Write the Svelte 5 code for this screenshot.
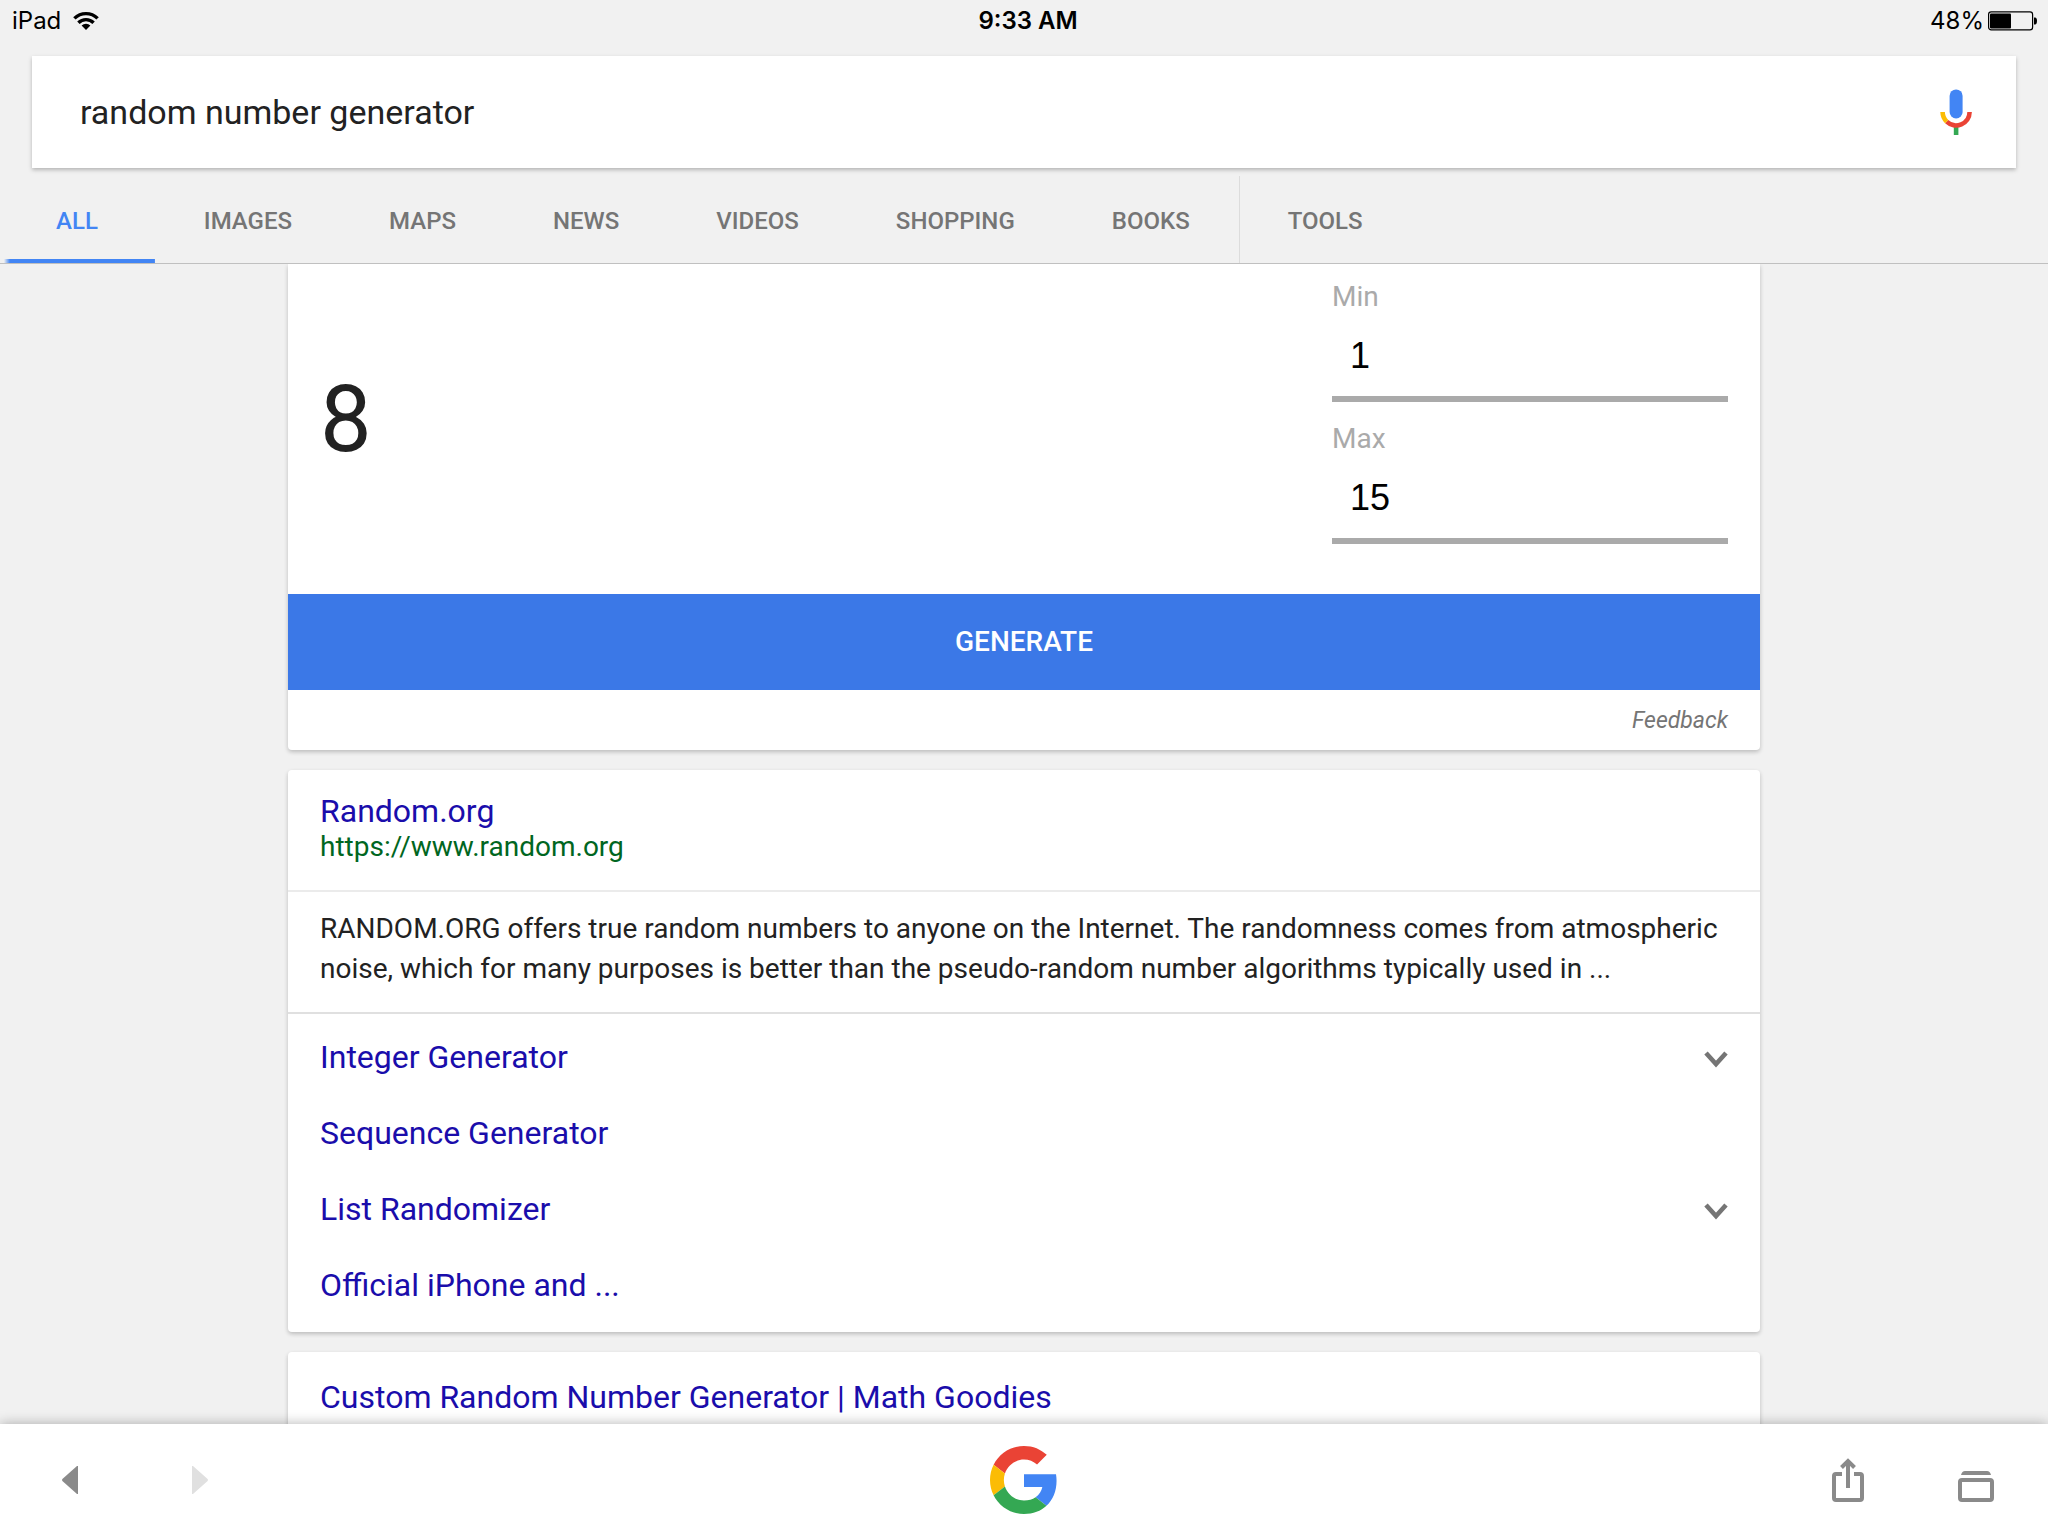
<script>
  const tabs = ['All', 'Images', 'Maps', 'News', 'Videos', 'Shopping', 'Books'];
  const sitelinks = [
    { label: 'Integer Generator', expandable: true },
    { label: 'Sequence Generator', expandable: false },
    { label: 'List Randomizer', expandable: true },
    { label: 'Official iPhone and ...', expandable: false }
  ];

  let query = $state('random number generator');
  let min = $state('1');
  let max = $state('15');
  let result = $state(8);

  function generate() {
    const low = Number(min);
    const high = Number(max);
    result = low + Math.floor(Math.random() * (high - low + 1));
  }
</script>

<div class="app">
  <div class="status">
    <div class="status-side">
      <span>iPad</span>
      <svg width="26" height="20" viewBox="0 0 26 20" fill="none" stroke="#000" stroke-width="3.4">
        <path d="M1.4 7.4a16.4 16.4 0 0 1 23.2 0" />
        <path d="M5.4 11.8a10.8 10.8 0 0 1 15.2 0" />
        <path d="M13 19l-4.4-4.6a6.4 6.4 0 0 1 8.8 0z" fill="#000" stroke="none" />
      </svg>
    </div>
    <time class="clock">9:33 AM</time>
    <div class="status-side end">
      <span>48%</span>
      <svg width="50" height="20" viewBox="0 0 50 20">
        <rect x="0.6" y="0.9" width="44" height="18" rx="2.6" fill="none" stroke="#000" stroke-width="1.2" />
        <rect x="2" y="2.4" width="21" height="15" rx="1" />
        <path d="M46 6.6h1c1.400 0 2 1.400 2 3.400s-.6 3.400-2 3.400h-1z" />
      </svg>
    </div>
  </div>

  <header>
    <form class="search" onsubmit={(e) => e.preventDefault()}>
      <input type="text" aria-label="Search" bind:value={query} />
      <button type="button" class="mic" aria-label="Voice search">
        <svg width="32" height="46" viewBox="0 0 32 46">
          <rect x="9.600" y="0.400" width="13" height="29" rx="6.400" fill="#4285f4" />
          <path d="M13.800 37h4.600v9h-4.600z" fill="#34a853" />
          <g fill="none" stroke-width="4.600">
            <path d="M29.600 23A13.500 13.500 0 0 1 6.700 32.600" stroke="#ea4335" />
            <path d="M6.700 32.600A13.500 13.500 0 0 1 2.600 23" stroke="#fbbc05" />
          </g>
        </svg>
      </button>
    </form>
    <nav>
      {#each tabs as tab, i}
        <a href="#{tab.toLowerCase()}" class:active={i === 0}>{tab}</a>
      {/each}
      <a href="#tools" class="tools">Tools</a>
    </nav>
  </header>

  <main>
    <section class="card first">
      <div class="generator">
        <output>{result}</output>
        <div class="fields">
          <div class="field">
            <label for="min">Min</label>
            <input id="min" type="text" inputmode="numeric" bind:value={min} />
          </div>
          <div class="field">
            <label for="max">Max</label>
            <input id="max" type="text" inputmode="numeric" bind:value={max} />
          </div>
        </div>
      </div>
      <button class="generate" onclick={generate}>GENERATE</button>
      <div class="feedback"><a href="#feedback">Feedback</a></div>
    </section>

    <article class="card">
      <div class="heading">
        <a class="title" href="#random-org">Random.org</a>
        <cite>https://www.random.org</cite>
      </div>
      <p>
        RANDOM.ORG offers true random numbers to anyone on the Internet. The randomness comes from
        atmospheric noise, which for many purposes is better than the pseudo-random number algorithms
        typically used in ...
      </p>
      <ul>
        {#each sitelinks as link}
          <li>
            <a class="title" href="#site">{link.label}</a>
            {#if link.expandable}
              <button class="expand" aria-label="Expand {link.label}">
                <svg width="24" height="24" viewBox="0 0 24 24" fill="none" stroke="#757575" stroke-width="4.600">
                  <path d="M2 8l10 11 10-11" />
                </svg>
              </button>
            {/if}
          </li>
        {/each}
      </ul>
    </article>

    <article class="card">
      <div class="heading single">
        <a class="title" href="#math-goodies">Custom Random Number Generator | Math Goodies</a>
      </div>
    </article>
  </main>

  <footer>
    <div class="tools-group">
      <button aria-label="Back">
        <svg width="64" height="64" viewBox="0 0 64 64" fill="#8a8a8a"><path d="M38 18v28h-1L22.400 33q-.8-1 0-2L37 18z" /></svg>
      </button>
      <button aria-label="Forward" disabled>
        <svg width="64" height="64" viewBox="0 0 64 64" fill="#e0e0e0"><path d="M24 18v28h1l14.600-13q.8-1 0-2L25 18z" /></svg>
      </button>
    </div>
    <button aria-label="Google home">
      <svg width="68" height="68" viewBox="0 0 48 48">
        <path fill="#ea4335" d="M24 9.500c3.540 0 6.710 1.220 9.210 3.600l6.850-6.850C35.900 2.380 30.470 0 24 0 14.620 0 6.510 5.380 2.560 13.220l7.980 6.190C12.430 13.720 17.740 9.500 24 9.500z" />
        <path fill="#4285f4" d="M46.980 24.550c0-1.570-.15-3.090-.38-4.550H24v9.020h12.940c-.58 2.960-2.260 5.480-4.780 7.180l7.730 6c4.510-4.180 7.090-10.360 7.090-17.650z" />
        <path fill="#fbbc05" d="M10.530 28.590c-.48-1.450-.76-2.990-.76-4.590s.27-3.140.76-4.590l-7.980-6.190C.92 16.460 0 20.120 0 24c0 3.880.92 7.540 2.560 10.780l7.970-6.190z" />
        <path fill="#34a853" d="M24 48c6.480 0 11.930-2.130 15.890-5.810l-7.730-6c-2.150 1.450-4.920 2.300-8.160 2.300-6.260 0-11.570-4.220-13.470-9.910l-7.980 6.190C6.510 42.620 14.620 48 24 48z" />
      </svg>
    </button>
    <div class="tools-group end">
      <button aria-label="Share">
        <svg width="64" height="64" viewBox="0 0 64 64" fill="none" stroke="#8a8a8a" stroke-width="4">
          <path d="M26 26h-6q-2 0-2 2v22q0 2 2 2h24q2 0 2-2V28q0-2-2-2h-6M32 40V13M25.500 19.500L32 13l6.500 6.500" />
        </svg>
      </button>
      <button aria-label="Recent pages">
        <svg width="64" height="64" viewBox="0 0 64 64">
          <rect x="16" y="32" width="32" height="20" rx="2" fill="none" stroke="#8a8a8a" stroke-width="4" />
          <path d="M17 27q1-4 4-4h22q3 0 4 4z" fill="#8a8a8a" />
        </svg>
      </button>
    </div>
  </footer>
</div>

<style>
  :global(body) {
    margin: 0;
    background: #f1f1f1;
  }

  .app {
    display: flex;
    flex-direction: column;
    height: 100vh;
    font-family: Roboto, 'Liberation Sans', sans-serif;
    color: #222;
    background: #f1f1f1;
  }

  svg {
    display: block;
  }

  button {
    border: 0;
    padding: 0;
    background: none;
    font: inherit;
    cursor: pointer;
  }

  a {
    text-decoration: none;
  }

  .status {
    display: grid;
    grid-template-columns: 1fr auto 1fr;
    align-items: center;
    height: 42px;
    padding: 0 10px 14px 12px;
    font-family: Inter, 'Liberation Sans', sans-serif;
    font-size: 24px;
    line-height: 42px;
    color: #000;
  }

  .status-side {
    display: flex;
    align-items: center;
    gap: 12px;
  }

  .status-side.end {
    justify-content: flex-end;
    gap: 4px;
  }

  .clock {
    padding-left: 6px;
    font-weight: 600;
  }

  header {
    flex: none;
    border-bottom: 1px solid #c0c0c0;
  }

  .search {
    display: flex;
    align-items: center;
    height: 112px;
    margin: 0 32px;
    padding: 0 44px 0 48px;
    box-sizing: border-box;
    background: #fff;
    box-shadow: 0 2px 4px rgba(0, 0, 0, 0.25);
  }

  .search input {
    flex: 1;
    min-width: 0;
    padding: 0;
    border: 0;
    outline: 0;
    background: none;
    color: #222;
    font: 34px/40px Roboto, 'Liberation Sans', sans-serif;
  }

  nav {
    display: flex;
    gap: 1px;
    height: 87px;
    padding: 8px 4px 0;
  }

  nav a {
    padding: 0 48px;
    color: #757575;
    font-size: 24px;
    font-weight: 500;
    line-height: 90px;
    text-transform: uppercase;
  }

  nav .active {
    padding: 0 57px 0 52px;
    color: #4285f4;
    background: linear-gradient(to right, transparent, #4285f4 6px) bottom / 100% 4px no-repeat;
  }

  nav .tools {
    border-left: 1px solid #dcdcdc;
  }

  main {
    display: flex;
    flex: 1;
    flex-direction: column;
    gap: 20px;
    min-height: 0;
    overflow: hidden;
    padding: 0 288px;
  }

  .card {
    flex: none;
    border-radius: 4px;
    background: #fff;
    box-shadow: 0 2px 4px rgba(0, 0, 0, 0.22);
  }

  .first {
    border-radius: 0 0 4px 4px;
  }

  .generator {
    display: flex;
    align-items: center;
    justify-content: space-between;
    padding: 14px 32px 50px;
  }

  output {
    padding-top: 18px;
    font-size: 92px;
    line-height: 108px;
  }

  .fields {
    display: flex;
    flex-direction: column;
    gap: 18px;
    width: 396px;
  }

  .field {
    display: flex;
    flex-direction: column;
  }

  .field label {
    color: #aaa;
    font-size: 28px;
    line-height: 38px;
  }

  .field input {
    height: 86px;
    box-sizing: border-box;
    padding: 0 18px;
    border: 0;
    border-bottom: 6px solid #aaa;
    outline: 0;
    color: #000;
    font: 36px 'Liberation Sans', Arial, sans-serif;
  }

  .generate {
    display: block;
    width: 100%;
    background: #3b78e7;
    color: #fff;
    font-size: 28px;
    font-weight: 500;
    line-height: 96px;
  }

  .feedback {
    padding: 2px 32px 0;
    font-size: 23px;
    font-style: italic;
    line-height: 58px;
    text-align: right;
  }

  .feedback a {
    color: #757575;
  }

  .heading {
    display: flex;
    flex-direction: column;
    align-items: flex-start;
    padding: 24px 32px;
  }

  .heading.single {
    padding: 28px 32px;
  }

  .title {
    color: #1a0dab;
    font-size: 32px;
    line-height: 34px;
  }

  cite {
    color: #006621;
    font-size: 28px;
    font-style: normal;
    line-height: 38px;
  }

  p {
    margin: 0;
    padding: 17px 32px 23px;
    border-top: 2px solid #ebebeb;
    font-size: 28px;
    line-height: 40px;
  }

  ul {
    margin: 0;
    padding: 5px 0 9px;
    border-top: 2px solid #e0e0e0;
    list-style: none;
  }

  li {
    display: flex;
    align-items: center;
    justify-content: space-between;
    height: 76px;
    padding: 0 32px;
  }

  footer {
    z-index: 1;
    display: grid;
    flex: none;
    grid-template-columns: 1fr auto 1fr;
    align-items: center;
    height: 112px;
    padding: 0 40px;
    background: #fff;
    box-shadow: 0 0 12px rgba(0, 0, 0, 0.3);
  }

  .tools-group {
    display: flex;
    gap: 64px;
  }

  .tools-group.end {
    justify-content: flex-end;
  }
</style>
